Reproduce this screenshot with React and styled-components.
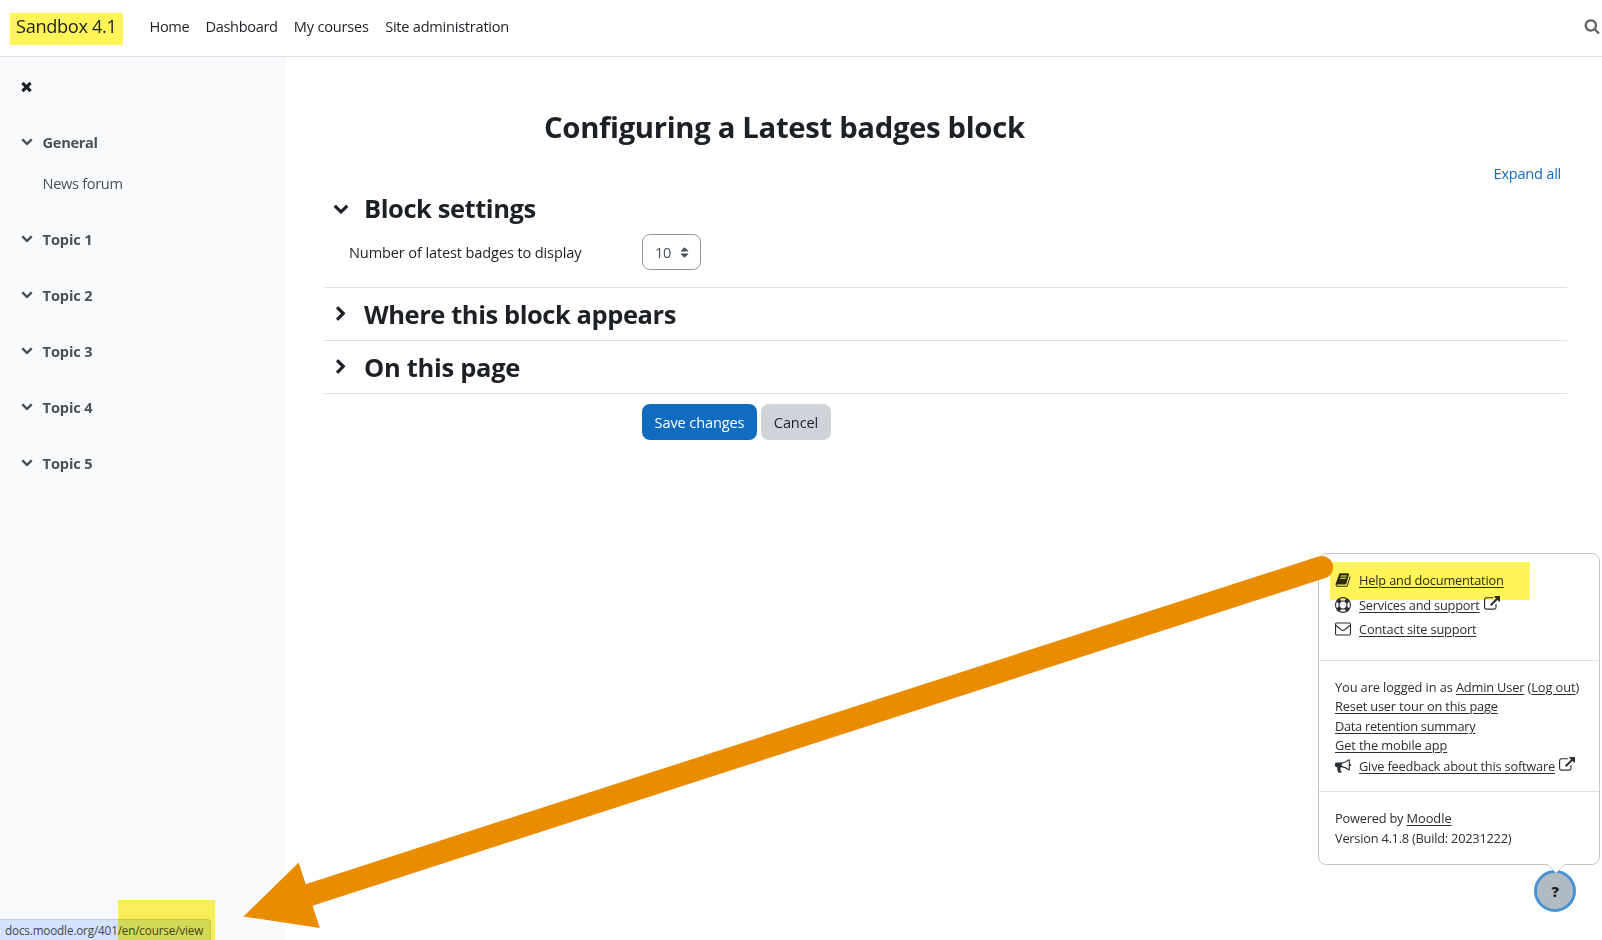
import React from 'react';
import styled, { createGlobalStyle } from 'styled-components';

const paths = {
  times: "M1490 1322q0 40-28 68l-136 136q-28 28-68 28t-68-28l-294-294-294 294q-28 28-68 28t-68-28l-136-136q-28-28-28-68t28-68l294-294-294-294q-28-28-28-68t28-68l136-136q28-28 68-28t68 28l294 294 294-294q28-28 68-28t68 28l136 136q28 28 28 68t-28 68l-294 294 294 294q28 28 28 68z",
  search: "M1216 832q0-185-131.5-316.5t-316.5-131.5-316.5 131.5-131.5 316.5 131.5 316.5 316.5 131.5 316.5-131.5 131.5-316.5zm512 832q0 52-38 90t-90 38q-54 0-90-38l-343-342q-179 124-399 124-143 0-273.5-55.5t-225-150-150-225-55.5-273.5 55.5-273.5 150-225 225-150 273.5-55.5 273.5 55.5 225 150 150 225 55.5 273.5q0 220-124 399l343 343q37 37 37 90z",
  down: "M1683 808l-742 741q-19 19-45 19t-45-19l-742-741q-19-19-19-45.5t19-45.5l166-165q19-19 45-19t45 19l531 531 531-531q19-19 45-19t45 19l166 165q19 19 19 45.5t-19 45.5z",
  right: "M1363 877l-742 742q-19 19-45 19t-45-19l-166-166q-19-19-19-45t19-45l531-531-531-531q-19-19-19-45t19-45l166-166q19-19 45-19t45 19l742 742q19 19 19 45t-19 45z",
  book: "M1703 478q40 57 18 129l-275 906q-19 64-76.5 107.5t-122.5 43.5h-923q-77 0-148.5-53.5t-99.5-131.5q-24-67-2-127 0-4 3-27t4-37q1-8-3-21.5t-3-19.5q2-11 8-21t16.5-23.5 16.5-23.5q23-38 45-91.5t30-91.5q3-10 .5-30t-.5-28q3-11 17-28t17-23q21-36 42-92t25-90q1-9-2.5-32t.5-28q4-13 22-30.5t22-22.5q19-26 42.5-84.5t27.5-96.5q1-8-3-25.5t-2-26.5q2-8 9-18t18-23 17-21q8-12 16.5-30.5t15-35 16-36 19.5-32 26.5-23.5 36-11.5 47.5 5.5l-1 3q38-9 51-9h761q74 0 114 56t18 130l-274 906q-36 119-71.5 153.5t-128.5 34.5h-869q-27 0-38 15-11 16-1 43 24 70 144 70h923q29 0 56-15.5t35-41.5l300-987q7-22 5-57 38 15 59 43zm-1064 2q-4 13 2 22.5t20 9.5h608q13 0 25.5-9.5t16.5-22.5l21-64q4-13-2-22.5t-20-9.5h-608q-13 0-25.5 9.5t-16.5 22.5zm-83 256q-4 13 2 22.5t20 9.5h608q13 0 25.5-9.5t16.5-22.5l21-64q4-13-2-22.5t-20-9.5h-608q-13 0-25.5 9.5t-16.5 22.5z",
  ring: "M896 0q182 0 348 71t286 191 191 286 71 348-71 348-191 286-286 191-348 71-348-71-286-191-191-286-71-348 71-348 191-286 286-191 348-71zm0 128q-190 0-361 90l194 194q82-28 167-28t167 28l194-194q-171-90-361-90zm-678 1129l194-194q-28-82-28-167t28-167l-194-194q-90 171-90 361t90 361zm678 407q190 0 361-90l-194-194q-82 28-167 28t-167-28l-194 194q171 90 361 90zm0-384q159 0 271.5-112.5t112.5-271.5-112.5-271.5-271.5-112.5-271.5 112.5-112.5 271.5 112.5 271.5 271.5 112.5zm484-217l194 194q90-171 90-361t-90-361l-194 194q28 82 28 167t-28 167z",
  external: "M1408 928v320q0 119-84.5 203.5t-203.5 84.5h-832q-119 0-203.5-84.5t-84.5-203.5v-832q0-119 84.5-203.5t203.5-84.5h704q14 0 23 9t9 23v64q0 14-9 23t-23 9h-704q-66 0-113 47t-47 113v832q0 66 47 113t113 47h832q66 0 113-47t47-113v-320q0-14 9-23t23-9h64q14 0 23 9t9 23zm384-864v512q0 26-19 45t-45 19-45-19l-176-176-652 652q-10 10-23 10t-23-10l-114-114q-10-10-10-23t10-23l652-652-176-176q-19-19-19-45t19-45 45-19h512q26 0 45 19t19 45z",
  bullhorn: "M1664 640q53 0 90.5 37.5t37.5 90.5-37.5 90.5-90.5 37.5v384q0 52-38 90t-90 38q-417-347-812-380-58 19-91 66t-31 100.5 40 92.5q-20 33-23 65.5t6 58 33.5 55 48 50 61.5 50.5q-29 58-111.5 83t-168.5 11.5-132-55.5q-7-23-29.5-87.5t-32-94.5-23-89-15-101 3.5-98.5 22-110.5h-122q-66 0-113-47t-47-113v-192q0-66 47-113t113-47h480q435 0 896-384 52 0 90 38t38 90v384zm-128 604v-954q-394 302-768 343v270q377 42 768 341z",
  sort: "M1408 1088q0 26-19 45l-448 448q-19 19-45 19t-45-19l-448-448q-19-19-19-45t19-45 45-19h896q26 0 45 19t19 45zm0-384q0 26-19 45t-45 19h-896q-26 0-45-19t-19-45 19-45l448-448q19-19 45-19t45 19l448 448q19 19 19 45z",
};

const Icon = ({ name, size = 16 }) => (
  <Glyph width={size} height={size} viewBox="0 0 1792 1792">
    <path d={paths[name]} fill="currentColor" />
  </Glyph>
);

const Envelope = () => (
  <Glyph width="16" height="16" viewBox="0 0 16 16" fill="none" stroke="currentColor" strokeWidth="1.1">
    <rect x="0.55" y="2.05" width="14.9" height="11.9" rx="1.2" />
    <path d="M0.8 4.2C2.6 6 4.4 7.2 6.2 8.7C7.4 9.6 8.6 9.6 9.8 8.7C11.6 7.2 13.4 6 15.2 4.2" />
  </Glyph>
);

const topics = ["Topic 1", "Topic 2", "Topic 3", "Topic 4", "Topic 5"];

const App = () => {
  return (
    <Page>
      <GlobalStyle />
      <Header>
        <Brand>Sandbox 4.1</Brand>
        <Nav>
          <NavLink>Home</NavLink>
          <NavLink>Dashboard</NavLink>
          <NavLink $ls="-0.2px">My courses</NavLink>
          <NavLink $ls="-0.25px">Site administration</NavLink>
        </Nav>
        <SearchButton><Icon name="search" /></SearchButton>
      </Header>

      <Body>
        <Sidebar>
          <CloseButton><Icon name="times" size={15} /></CloseButton>
          <Section>
            <SectionTitle><Icon name="down" size={12} />General</SectionTitle>
            <Activity>News forum</Activity>
          </Section>
          {topics.map((topic) => (
            <Section key={topic}>
              <SectionTitle $ls="-0.12px"><Icon name="down" size={12} />{topic}</SectionTitle>
            </Section>
          ))}
        </Sidebar>

        <Main>
          <Title>Configuring a Latest badges block</Title>
          <ExpandAll>Expand all</ExpandAll>
          <Fieldset $open>
            <Legend><Icon name="down" />Block settings</Legend>
            <Field>
              <Label>Number of latest badges to display</Label>
              <Select>10<Icon name="sort" size={13} /></Select>
            </Field>
          </Fieldset>
          <Fieldset>
            <Legend><Icon name="right" />Where this block appears</Legend>
          </Fieldset>
          <Fieldset>
            <Legend $ls="-0.3px"><Icon name="right" />On this page</Legend>
          </Fieldset>
          <Actions>
            <Button $primary>Save changes</Button>
            <Button>Cancel</Button>
          </Actions>
        </Main>
      </Body>

      <Popover>
        <PopoverSection $links>
          <PopoverRow $tall><Icon name="book" /><Link>Help and documentation</Link></PopoverRow>
          <PopoverRow $tall>
            <Icon name="ring" /><Link $ls="-0.22px">Services and support</Link><Icon name="external" />
          </PopoverRow>
          <PopoverRow $tall><Envelope /><Link>Contact site support</Link></PopoverRow>
          <Highlight />
        </PopoverSection>
        <PopoverSection>
          <PopoverText>You are logged in as <Link>Admin User</Link> (<Link $ls="-0.05px">Log out</Link>)</PopoverText>
          <PopoverText><Link>Reset user tour on this page</Link></PopoverText>
          <PopoverText><Link $ls="-0.28px">Data retention summary</Link></PopoverText>
          <PopoverText><Link $ls="-0.12px">Get the mobile app</Link></PopoverText>
          <PopoverRow>
            <Icon name="bullhorn" /><Link $ls="-0.2px">Give feedback about this software</Link><Icon name="external" />
          </PopoverRow>
        </PopoverSection>
        <PopoverSection>
          <PopoverText $ls="-0.2px">Powered by <Link $ls="0">Moodle</Link></PopoverText>
          <PopoverText $ls="-0.23px">Version 4.1.8 (Build: 20231222)</PopoverText>
        </PopoverSection>
      </Popover>
      <HelpButton>?</HelpButton>
      <Tail width="18" height="11" viewBox="0 0 18 11">
        <path d="M0.5 0L9 8.5L17.5 0Z" fill="#fff" />
        <path d="M0.5 0.5L9 9L17.5 0.5" fill="none" stroke="#c4c6c8" />
      </Tail>

      <StatusBar>docs.moodle.org/401/en/course/view</StatusBar>
      <StatusHighlight />

      <Arrow width="1602" height="940" viewBox="0 0 1602 940">
        <path d="M309 895L1321.8 567.3" stroke="#ea8c00" strokeWidth="22.6" strokeLinecap="round" />
        <path d="M243.5 916.5L298.7 862.5L319.8 928Z" fill="#ea8c00" />
      </Arrow>
    </Page>
  );
};

const GlobalStyle = createGlobalStyle`
  * {
    box-sizing: border-box;
  }

  body {
    margin: 0;
    overflow: hidden;
    background: #fff;
    color: #1d2125;
    font-family: "Open Sans", "Noto Sans", sans-serif;
    font-size: 14.6px;
    letter-spacing: -0.15px;
  }
`;

const Glyph = styled.svg`
  display: block;
  flex: none;
`;

const Page = styled.div`
  position: relative;
  display: flex;
  flex-direction: column;
  height: 940px;
  overflow: hidden;
`;

const Header = styled.header`
  display: flex;
  align-items: flex-start;
  height: 57px;
  flex: none;
  border-bottom: 1px solid #dee2e6;
  padding: 13px 2px 0 10px;
`;

const Brand = styled.div`
  width: 113px;
  height: 32px;
  padding-left: 6px;
  background: #fff458;
  font-size: 18.2px;
  line-height: 27px;
  letter-spacing: -0.34px;
`;

const Nav = styled.nav`
  display: flex;
  gap: 16.3px;
  margin-left: 26.5px;
`;

const NavLink = styled.a`
  line-height: 26px;
  letter-spacing: ${(props) => props.$ls || "-0.37px"};
`;

const SearchButton = styled.div`
  margin: 5px 0 0 auto;
  color: #5f6266;
`;

const Body = styled.div`
  display: flex;
  flex: 1;
`;

const Sidebar = styled.aside`
  width: 285px;
  flex: none;
  padding: 22px 20px;
  background: #f8f9fb;
  color: #495057;
`;

const CloseButton = styled.div`
  margin: 0 0 36px -1px;
  color: #1d2125;
`;

const Section = styled.div`
  margin-bottom: 32px;
`;

const SectionTitle = styled.div`
  display: flex;
  align-items: center;
  gap: 10px;
  height: 24px;
  padding-left: 0.6px;
  font-weight: 700;
  letter-spacing: ${(props) => props.$ls || "-0.32px"};

  svg {
    margin-bottom: 2px;
  }
`;

const Activity = styled.div`
  margin-top: 18px;
  padding-left: 22.6px;
  line-height: 23px;
  letter-spacing: -0.33px;
`;

const Main = styled.main`
  flex: 1;
  display: flex;
  flex-direction: column;
  padding: 52px 35px 0 39px;
`;

const Title = styled.h2`
  margin: 0 0 0 220px;
  font-size: 29.3px;
  font-weight: 700;
  line-height: 36px;
  letter-spacing: -0.34px;
`;

const ExpandAll = styled.a`
  align-self: flex-end;
  margin: 16px 6px 0 0;
  line-height: 24px;
  letter-spacing: -0.25px;
  color: #0f6cbf;
`;

const Fieldset = styled.div`
  height: ${(props) => (props.$open ? "103px" : "53px")};
  border-bottom: 1px solid #dee2e6;
  padding-top: ${(props) => (props.$open ? "2px" : "5px")};
`;

const Legend = styled.h3`
  display: flex;
  align-items: center;
  gap: 15px;
  height: 42px;
  margin: 0 0 0 9px;
  font-size: 25.5px;
  font-weight: 700;
  letter-spacing: ${(props) => props.$ls || "-0.43px"};
`;

const Field = styled.div`
  display: flex;
  align-items: center;
  margin-top: 5px;
`;

const Label = styled.label`
  width: 318px;
  padding-left: 25px;
  letter-spacing: -0.14px;
`;

const Select = styled.div`
  display: flex;
  align-items: center;
  justify-content: space-between;
  width: 59px;
  height: 36px;
  border: 1px solid #8f959e;
  border-radius: 8px;
  padding: 0 9px 0 12px;
  color: #495057;
  letter-spacing: -0.35px;
`;

const Actions = styled.div`
  display: flex;
  gap: 4px;
  padding: 10px 0 0 318px;
`;

const Button = styled.button`
  width: ${(props) => (props.$primary ? "115px" : "70px")};
  height: 36px;
  padding: 0;
  border: none;
  border-radius: 8px;
  background: ${(props) => (props.$primary ? "#0f6cbf" : "#ced4da")};
  color: ${(props) => (props.$primary ? "#fff" : "#1d2125")};
  font: inherit;
  letter-spacing: -0.13px;
`;

const Popover = styled.div`
  position: absolute;
  top: 553px;
  left: 1318px;
  width: 282px;
  height: 312px;
  border: 1px solid #c4c6c8;
  border-radius: 8px;
  background: #fff;
  color: #2b2f33;
  font-size: 12.8px;
`;

const PopoverSection = styled.div`
  position: relative;
  padding: ${(props) => (props.$links ? "14px 16px 18px" : "17px 16px 16px")};

  & + & {
    border-top: 1px solid #dee2e6;
  }
`;

const PopoverRow = styled.div`
  display: flex;
  align-items: center;
  height: ${(props) => (props.$tall ? "24.5px" : "19.6px")};

  a {
    margin: 0 4px 0 8px;
  }

  svg:last-child {
    margin-bottom: 2px;
  }
`;

const PopoverText = styled.div`
  line-height: 19.6px;
  white-space: nowrap;
  letter-spacing: ${(props) => props.$ls || "-0.1px"};
`;

const Link = styled.a`
  text-decoration: underline;
  text-decoration-thickness: 1px;
  text-underline-offset: 2px;
  letter-spacing: ${(props) => props.$ls || "-0.17px"};
`;

const Highlight = styled.div`
  position: absolute;
  top: 8px;
  left: 11px;
  width: 200px;
  height: 38px;
  background: #fff458;
  mix-blend-mode: multiply;
`;

const HelpButton = styled.div`
  position: absolute;
  top: 870px;
  left: 1534px;
  display: flex;
  align-items: center;
  justify-content: center;
  width: 42px;
  height: 42px;
  border: 3px solid #4a92d3;
  border-radius: 50%;
  background: #b1bbc4;
  font-weight: 800;
`;

const Tail = styled.svg`
  position: absolute;
  top: 864px;
  left: 1546.5px;
`;

const StatusBar = styled.div`
  position: absolute;
  bottom: 0;
  left: 0;
  width: 211px;
  height: 21px;
  padding-left: 5px;
  border: solid #c8ccd4;
  border-width: 1px 1px 0 0;
  border-top-right-radius: 4px;
  background: #d3e2fd;
  color: #45484d;
  font-size: 11.7px;
  line-height: 20px;
`;

const StatusHighlight = styled.div`
  position: absolute;
  bottom: 0;
  left: 118px;
  width: 97px;
  height: 40px;
  background: #fff458;
  mix-blend-mode: multiply;
`;

const Arrow = styled.svg`
  position: absolute;
  top: 0;
  left: 0;
  pointer-events: none;
`;

export default App;
